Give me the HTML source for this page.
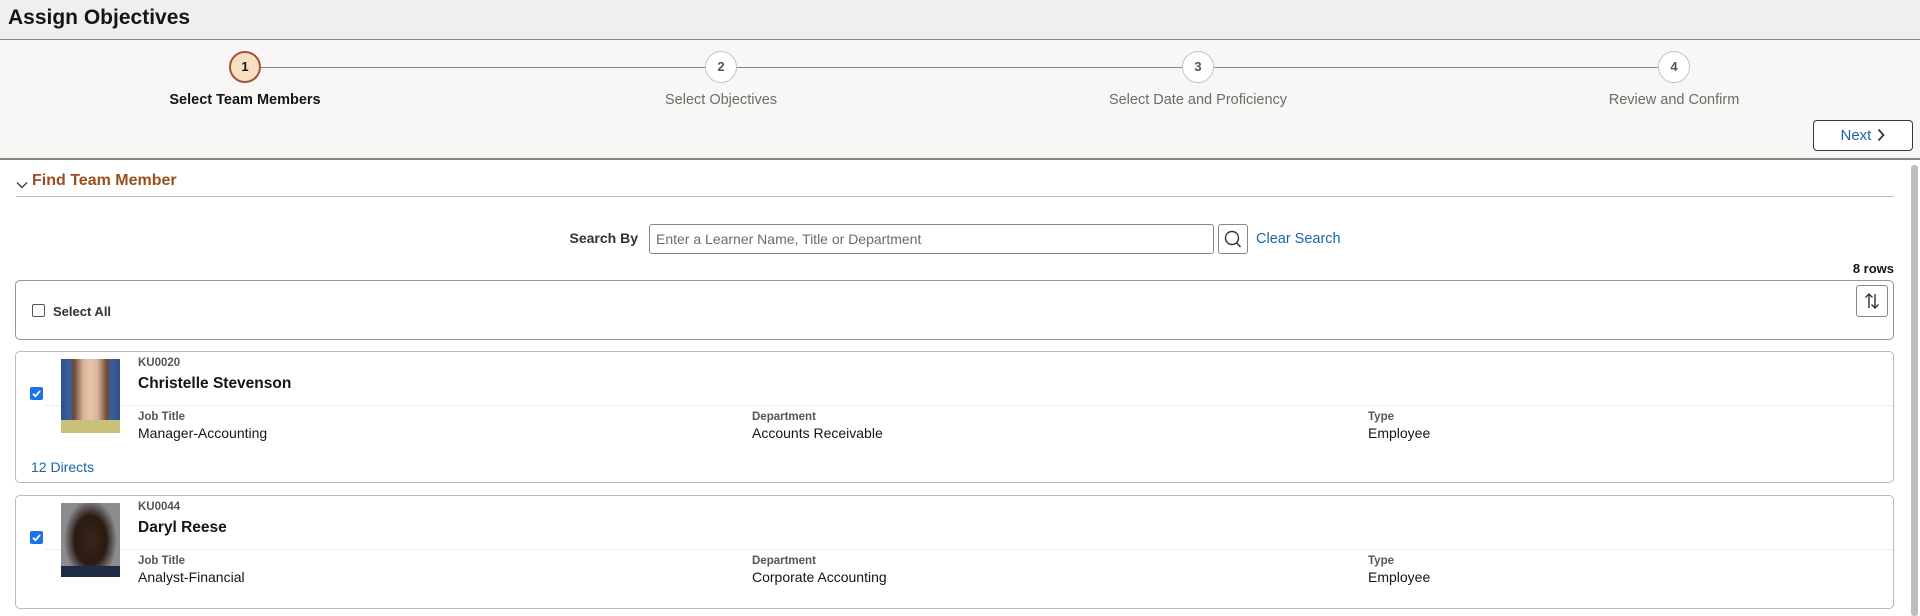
<!DOCTYPE html>
<html><head><meta charset="utf-8"><style>
*{box-sizing:border-box;margin:0;padding:0}
body{width:1920px;height:616px;overflow:hidden;background:#fff;font-family:"Liberation Sans",Arial,sans-serif;position:relative;color:#000}
.abs{position:absolute}
.hdr{left:0;top:0;width:1920px;height:40px;background:#f0efed;border-bottom:1px solid #8a8682}
.hdr h1{position:absolute;left:8px;top:6px;font-size:21px;font-weight:bold;color:#161513}
.train{left:0;top:40px;width:1920px;height:120px;background:#f8f7f5;border-bottom:2px solid #8a8682}
.line{top:67px;left:245px;width:1430px;height:1px;background:#8a8682}
.circ{width:32px;height:32px;border-radius:50%;border:1px solid #c7c4c0;background:#fff;top:51px;text-align:center;line-height:30px;font-size:13px;font-weight:bold;color:#555}
.circ.act{background:#f7e0c2;border:2px solid #a0533a;color:#161513;line-height:28px}
.lbl{top:92px;width:300px;text-align:center;font-size:14.5px;color:#6f6c68}
.lbl.act{color:#161513;font-weight:bold}
.next{left:1813px;top:120px;width:100px;height:31px;border:1px solid #3a3835;border-radius:4px;background:#fff;color:#1c64a8;font-size:15px;text-align:center;line-height:29px}
.sec{left:32px;top:172px;font-size:16px;font-weight:bold;color:#9c4f1e}
.secl{left:16px;top:196px;width:1878px;height:1px;background:#bfbcb8}
.card{border:1px solid #bcbab6;border-radius:5px;background:#fff}
.cb{width:13px;height:13px;border-radius:2px;background:#1a73e8}
.cb svg{display:block}
.k{font-size:11.5px;font-weight:bold;color:#555}
.v{font-size:14px;color:#161513}
</style></head><body>
<div class="abs hdr"><h1>Assign Objectives</h1></div>
<div class="abs train"></div>
<div class="abs line"></div>
<div class="abs circ act" style="left:229px">1</div>
<div class="abs circ" style="left:705px">2</div>
<div class="abs circ" style="left:1182px">3</div>
<div class="abs circ" style="left:1658px">4</div>
<div class="abs lbl act" style="left:95px">Select Team Members</div>
<div class="abs lbl" style="left:571px">Select Objectives</div>
<div class="abs lbl" style="left:1048px">Select Date and Proficiency</div>
<div class="abs lbl" style="left:1524px">Review and Confirm</div>
<div class="abs next">Next <svg width="10" height="14" viewBox="0 0 10 14" style="vertical-align:-2px"><path d="M2.5 1.5l5 5.5-5 5.5" fill="none" stroke="#333" stroke-width="1.7"/></svg></div>
<div class="abs" style="left:1911px;top:165px;width:7px;height:451px;background:#bdbdbd;border-radius:3px"></div>
<svg class="abs" style="left:16px;top:180px" width="12" height="10" viewBox="0 0 12 10"><path d="M1 2.5l5 5 5-5" fill="none" stroke="#333" stroke-width="1.3"/></svg>
<div class="abs sec">Find Team Member</div>
<div class="abs secl"></div>
<div class="abs" style="left:560px;top:230px;width:78px;text-align:right;font-size:14px;font-weight:bold;color:#333">Search By</div>
<div class="abs" style="left:649px;top:224px;width:565px;height:30px;border:1px solid #8a8682;border-radius:3px;background:#fff;font-size:14px;color:#6f6c68;padding:6px 6px;line-height:16px">Enter a Learner Name, Title or Department</div>
<div class="abs" style="left:1218px;top:224px;width:30px;height:30px;border:1px solid #8a8682;border-radius:3px;background:#fff"><svg width="28" height="28" viewBox="0 0 28 28"><circle cx="13" cy="13" r="6.5" fill="none" stroke="#333" stroke-width="1.4"/><path d="M17.5 17.5l4 4.5" stroke="#333" stroke-width="1.5"/></svg></div>
<div class="abs" style="left:1256px;top:231px;font-size:14.5px;color:#1c64a8">Clear Search</div>
<div class="abs" style="left:1800px;top:261px;width:94px;text-align:right;font-size:13px;font-weight:bold;color:#161513">8 rows</div>
<div class="abs card" style="left:15px;top:280px;width:1879px;height:60px;border-color:#8c98a8"></div>
<div class="abs" style="left:32px;top:304px;width:13px;height:13px;border:1px solid #555;border-radius:2px;background:#fff"></div>
<div class="abs" style="left:53px;top:304px;font-size:13px;font-weight:bold;color:#333">Select All</div>
<div class="abs" style="left:1856px;top:285px;width:32px;height:32px;border:1px solid #8a8682;border-radius:3px;background:#fff"><svg width="30" height="30" viewBox="0 0 30 30"><path d="M12 22V8M8.5 11.5L12 8l3.5 3.5M18 8v14M14.5 18.5L18 22l3.5-3.5" fill="none" stroke="#333" stroke-width="1.4"/></svg></div>

<div class="abs card" style="left:15px;top:351px;width:1879px;height:132px"></div>
<div class="abs" style="left:45px;top:405px;width:1848px;height:1px;background:#eeedeb"></div>
<div class="abs cb" style="left:30px;top:387px"><svg width="13" height="13" viewBox="0 0 13 13"><path d="M3 6.8l2.4 2.4L10 4" fill="none" stroke="#fff" stroke-width="1.8"/></svg></div>
<div class="abs" style="left:61px;top:359px;width:59px;height:74px;background:linear-gradient(90deg,#2e4f8c 0%,#3c5fa0 15%,#6b4a32 22%,#d9b49c 38%,#e8c4aa 50%,#d9b49c 62%,#6b4a32 78%,#3c5fa0 85%,#2e4f8c 100%)"></div>
<div class="abs" style="left:61px;top:420px;width:59px;height:13px;background:#c9c07a"></div>
<div class="abs k" style="left:138px;top:357px">KU0020</div>
<div class="abs" style="left:138px;top:375px;font-size:15.5px;font-weight:bold;color:#161513">Christelle Stevenson</div>
<div class="abs k" style="left:138px;top:411px">Job Title</div>
<div class="abs v" style="left:138px;top:425px">Manager-Accounting</div>
<div class="abs k" style="left:752px;top:411px">Department</div>
<div class="abs v" style="left:752px;top:425px">Accounts Receivable</div>
<div class="abs k" style="left:1368px;top:411px">Type</div>
<div class="abs v" style="left:1368px;top:425px">Employee</div>
<div class="abs" style="left:31px;top:459px;font-size:14px;color:#1c64a8">12 Directs</div>

<div class="abs card" style="left:15px;top:495px;width:1879px;height:114px"></div>
<div class="abs" style="left:45px;top:549px;width:1848px;height:1px;background:#eeedeb"></div>
<div class="abs cb" style="left:30px;top:531px"><svg width="13" height="13" viewBox="0 0 13 13"><path d="M3 6.8l2.4 2.4L10 4" fill="none" stroke="#fff" stroke-width="1.8"/></svg></div>
<div class="abs" style="left:61px;top:503px;width:59px;height:74px;background:radial-gradient(ellipse 45% 55% at 50% 50%,#3a2418 0%,#2a1a12 60%,#8a8c90 100%)"></div>
<div class="abs" style="left:61px;top:566px;width:59px;height:11px;background:#1f2a44"></div>
<div class="abs k" style="left:138px;top:501px">KU0044</div>
<div class="abs" style="left:138px;top:519px;font-size:15.5px;font-weight:bold;color:#161513">Daryl Reese</div>
<div class="abs k" style="left:138px;top:555px">Job Title</div>
<div class="abs v" style="left:138px;top:569px">Analyst-Financial</div>
<div class="abs k" style="left:752px;top:555px">Department</div>
<div class="abs v" style="left:752px;top:569px">Corporate Accounting</div>
<div class="abs k" style="left:1368px;top:555px">Type</div>
<div class="abs v" style="left:1368px;top:569px">Employee</div>
</body></html>
